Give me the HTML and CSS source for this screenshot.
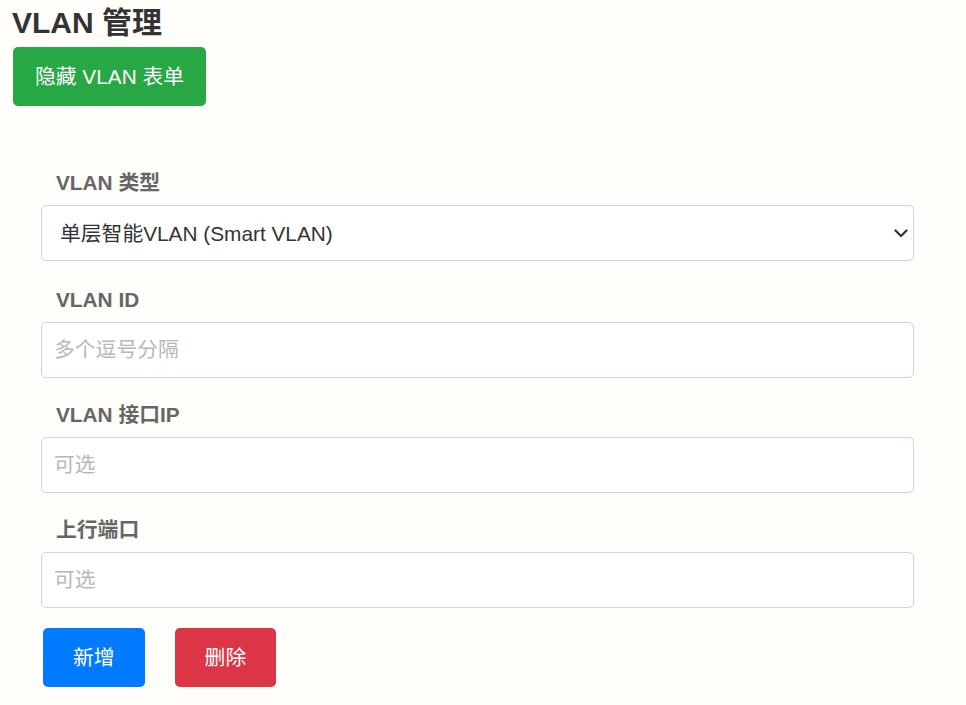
FILE: index.html
```html
<!DOCTYPE HTML>
<html lang="zh-CN">
<head>
    <meta http-equiv="content-type" content="text/html; charset=utf-8">
    <title>VLAN 管理</title>
    <link rel="stylesheet" href="styles.css">
</head>
<body id="page">
    <h1 class="page__title">VLAN 管理</h1>
    <button class="btn btn--green" type="button">隐藏 VLAN 表单</button>

    <form class="vlan-form" name="vlan">
        <div class="vlan-form__group vlan-form__group--first">
            <label class="vlan-form__label" for="vlan-type">VLAN 类型</label>
            <div class="vlan-form__select-wrap">
                <select class="vlan-form__control vlan-form__select" id="vlan-type">
                    <option value="smart">单层智能VLAN (Smart VLAN)</option>
                    <option value="mux">MUX VLAN</option>
                    <option value="qinq">QinQ VLAN</option>
                </select>
                <svg class="vlan-form__chevron" width="14" height="9" viewBox="0 0 14 9" aria-hidden="true">
                    <path d="M1.5 1.5 L7 7 L12.5 1.5" fill="none" stroke="#333" stroke-width="2.2" stroke-linecap="round" stroke-linejoin="round"/>
                </svg>
            </div>
        </div>
        <div class="vlan-form__group">
            <label class="vlan-form__label" for="vlan-id">VLAN ID</label>
            <input class="vlan-form__control" id="vlan-id" type="text" placeholder="多个逗号分隔">
        </div>
        <div class="vlan-form__group">
            <label class="vlan-form__label" for="vlan-ip">VLAN 接口IP</label>
            <input class="vlan-form__control" id="vlan-ip" type="text" placeholder="可选">
        </div>
        <div class="vlan-form__group">
            <label class="vlan-form__label" for="vlan-uplink">上行端口</label>
            <input class="vlan-form__control" id="vlan-uplink" type="text" placeholder="可选">
        </div>
        <div class="vlan-form__actions">
            <button class="btn btn--blue" type="button">新增</button>
            <button class="btn btn--red" type="button">删除</button>
        </div>
    </form>
</body>
</html>
```

FILE: styles.css
```css
/* Colors */
:root {
    --page-background: rgb(255, 254, 250);
    --title-text: rgb(51, 51, 51);
    --label-text: rgb(102, 102, 102);
    --input-border: rgb(206, 212, 218);
    --placeholder-text: rgb(183, 183, 183);
    --green: rgb(40, 167, 69);
    --blue: rgb(0, 123, 255);
    --red: rgb(220, 53, 69);
}

html, body {
    margin: 0;
    padding: 0;
    font-family: "Liberation Sans", "Noto Sans CJK SC", sans-serif;
}

#page {
    background-color: var(--page-background);
    min-height: 100vh;
    padding: 0 12px;
    box-sizing: border-box;
}

.page__title {
    margin: 0;
    padding-top: 3px;
    font-size: 30px;
    line-height: 40px;
    color: var(--title-text);
}

.btn {
    border: none;
    border-radius: 5px;
    color: #fff;
    font-family: inherit;
    font-size: 20.8px;
    line-height: 25px;
    padding: 17px 22px;
    cursor: pointer;
}

.btn--green {
    margin-top: 4px;
    margin-left: 1px;
    background-color: var(--green);
}

.btn--blue {
    background-color: var(--blue);
    padding: 17px 30px;
}

.btn--red {
    background-color: var(--red);
    padding: 17px 30px;
}

.vlan-form {
    padding: 65px 40px 0 29px;
}

.vlan-form__group {
    margin-bottom: 25px;
}

.vlan-form__group--first {
    margin-bottom: 27px;
}

.vlan-form__label {
    display: block;
    padding-left: 15px;
    margin-bottom: 10px;
    font-size: 20.8px;
    line-height: 24px;
    font-weight: bold;
    color: var(--label-text);
}

.vlan-form__control {
    display: block;
    width: 100%;
    height: 56px;
    box-sizing: border-box;
    border: 1px solid var(--input-border);
    border-radius: 5px;
    background-color: #fff;
    padding: 0 12px;
    font-family: inherit;
    font-size: 20.8px;
    color: var(--title-text);
}

.vlan-form__control::placeholder {
    color: var(--placeholder-text);
}

.vlan-form__select-wrap {
    position: relative;
}

.vlan-form__select {
    appearance: none;
    padding-left: 18px;
}

.vlan-form__chevron {
    position: absolute;
    right: 6px;
    top: 24px;
    pointer-events: none;
}

.vlan-form__actions {
    display: flex;
    gap: 30px;
    margin-top: -5px;
    padding-left: 2px;
}
```
